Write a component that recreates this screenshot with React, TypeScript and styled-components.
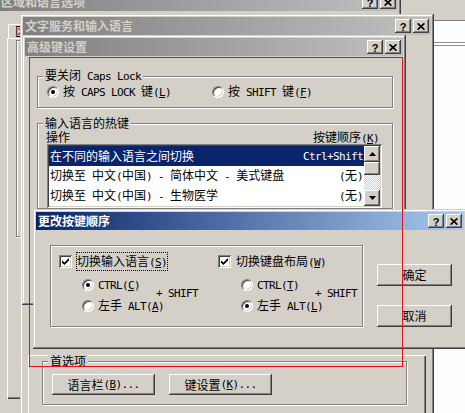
import React from "react";
import styled, { createGlobalStyle, css } from "styled-components";

const FACE = "#d4d0c8";
const SHADOW = "#808080";
const DARK = "#404040";
const NAVY = "#0a246a";

const GlobalStyle = createGlobalStyle`
  html, body { margin: 0; padding: 0; overflow: hidden; }
  body {
    background: ${FACE};
    font-family: "Noto Sans CJK SC", "DejaVu Sans", sans-serif;
    font-size: 12px;
    line-height: 14px;
    color: #000;
  }
  u { text-underline-offset: 1px; }
`;

const raisedWin = css`
  box-shadow: inset -1px -1px ${DARK}, inset 1px 1px ${FACE},
    inset -2px -2px ${SHADOW}, inset 2px 2px #fff;
`;

const raisedBtn = css`
  box-shadow: inset -1px -1px ${DARK}, inset 1px 1px #fff,
    inset -2px -2px ${SHADOW}, inset 2px 2px ${FACE};
`;

const sunken = css`
  box-shadow: inset 1px 1px ${SHADOW}, inset -1px -1px #fff,
    inset 2px 2px ${DARK}, inset -2px -2px ${FACE};
`;

const Desktop = styled.div`
  position: relative;
  width: 465px;
  height: 413px;
  overflow: hidden;
  background: ${FACE};
`;

// latin runs use a half-width mono face, like SimSun's ascii
const Lat = styled.span`
  font-family: "DejaVu Sans Mono", "Liberation Mono", monospace;
  font-size: 11px;
  letter-spacing: -0.62px;
  white-space: pre;
`;

const mnemonic = (s: string) =>
  s.split(/&(.)/).map((p, i) => (i % 2 ? <u key={i}>{p}</u> : p));

const Txt = ({ s }: { s: string }) => (
  <>
    {s
      .split(/([\u0000-\u2e7f]+)/)
      .filter(Boolean)
      .map((run, i) =>
        /^[\u0000-\u2e7f]+$/.test(run) ? (
          <Lat key={i}>{mnemonic(run)}</Lat>
        ) : (
          <React.Fragment key={i}>{run}</React.Fragment>
        )
      )}
  </>
);

/* ---------- windows ---------- */

const Win = styled.div<{ $x: number; $y: number; $w: number; $h: number }>`
  position: absolute;
  left: ${(p) => p.$x}px;
  top: ${(p) => p.$y}px;
  width: ${(p) => p.$w}px;
  height: ${(p) => p.$h}px;
  box-sizing: border-box;
  padding: 3px;
  background: ${FACE};
  display: flex;
  flex-direction: column;
  ${raisedWin}
`;

const TitleBar = styled.div<{ $active?: boolean }>`
  flex: none;
  height: 18px;
  display: flex;
  align-items: center;
  gap: 2px;
  padding: 0 2px;
  background: linear-gradient(
    to right,
    ${(p) => (p.$active ? `${NAVY}, #a6caf0` : `${SHADOW}, #c0c0c0`)}
  );
  color: ${(p) => (p.$active ? "#fff" : FACE)};
  font-weight: 700;
`;

const TitleText = styled.div`
  flex: 1;
  white-space: nowrap;
  overflow: hidden;
`;

const CapBtn = styled.div`
  width: 16px;
  height: 14px;
  box-sizing: border-box;
  background: ${FACE};
  display: flex;
  align-items: center;
  justify-content: center;
  color: #000;
  font: bold 11px "Liberation Sans", sans-serif;
  padding-top: 1px;
  ${raisedBtn}
`;

const Caption = ({ title, active }: { title: string; active?: boolean }) => (
  <TitleBar $active={active}>
    <TitleText>{title}</TitleText>
    <CapBtn>?</CapBtn>
    <CapBtn>
      <svg width="8" height="7" viewBox="0 0 8 7">
        <path d="M0.6 0.4 7.4 6.6 M7.4 0.4 0.6 6.6" stroke="#000" strokeWidth="1.7" />
      </svg>
    </CapBtn>
  </TitleBar>
);

/* ---------- common controls ---------- */

const GroupBox = styled.fieldset`
  margin: 0;
  min-width: 0;
  border: 1px solid ${SHADOW};
  box-shadow: inset 1px 1px #fff, 1px 1px #fff;
`;

const Legend = styled.legend`
  padding: 0 2px;
  margin-left: -4px;
  line-height: 12px;
  background: ${FACE};
`;

const PushBtn = styled.div<{ $w?: number; $h?: number }>`
  width: ${(p) => p.$w ?? 75}px;
  height: ${(p) => p.$h ?? 22}px;
  box-sizing: border-box;
  background: ${FACE};
  display: flex;
  align-items: center;
  justify-content: center;
  white-space: nowrap;
  ${raisedBtn}
`;

const Opt = styled.div`
  display: flex;
  align-items: center;
  gap: 4px;
  height: 14px;
  white-space: nowrap;
`;

const RadioDot = styled.span<{ $on?: boolean }>`
  flex: none;
  width: 12px;
  height: 12px;
  box-sizing: border-box;
  border-radius: 50%;
  background: #fff;
  border: 1px solid;
  border-color: ${SHADOW} #fff #fff ${SHADOW};
  box-shadow: inset 1px 1px ${DARK}, inset -1px -1px ${FACE};
  display: flex;
  align-items: center;
  justify-content: center;

  &::after {
    content: "";
    display: ${(p) => (p.$on ? "block" : "none")};
    width: 4px;
    height: 4px;
    border-radius: 50%;
    background: #000;
  }
`;

const Radio = ({ label, on }: { label: string; on?: boolean }) => (
  <Opt>
    <RadioDot $on={on} />
    <span>
      <Txt s={label} />
    </span>
  </Opt>
);

const CheckRow = styled.div`
  display: flex;
  align-items: center;
  gap: 4px;
  height: 17px;
  white-space: nowrap;
`;

const CheckBox = styled.span`
  flex: none;
  width: 13px;
  height: 13px;
  box-sizing: border-box;
  background: #fff;
  display: flex;
  align-items: center;
  justify-content: center;
  ${sunken}
`;

const CheckLabel = styled.span<{ $focus?: boolean }>`
  border: 1px dotted ${(p) => (p.$focus ? "#000" : "transparent")};
  line-height: 15px;
`;

const Check = ({ label, focus }: { label: string; focus?: boolean }) => (
  <CheckRow>
    <CheckBox>
      <svg width="7" height="7" viewBox="0 0 7 7">
        <path d="M0 2.2 L2.4 4.4 L7 0 L7 2.6 L2.4 7 L0 4.8 Z" fill="#000" />
      </svg>
    </CheckBox>
    <CheckLabel $focus={focus}>
      <Txt s={label} />
    </CheckLabel>
  </CheckRow>
);

/* ---------- window 1: 区域和语言选项 (behind) ---------- */

const W1Body = styled.div`
  padding: 13px 0 0 8px;
`;

const TabRow = styled.div`
  display: flex;
  height: 14px;
`;

const Tab = styled.div`
  padding: 0 6px 0 7px;
  margin-left: 1px;
  white-space: nowrap;
  box-shadow: inset 1px 1px #fff, inset -1px 0 ${DARK};
`;

const TabPage = styled.div<{ $h: number }>`
  height: ${(p) => p.$h}px;
  box-sizing: border-box;
  box-shadow: inset 1px 1px #fff, inset -1px -1px ${DARK}, inset -2px -2px ${SHADOW};
`;

const W1Page = styled(TabPage)`
  padding: 2px 9px;
`;

const W1Group = styled.div`
  height: 195px;
  border: 1px solid ${SHADOW};
  box-shadow: inset 1px 1px #fff, 1px 1px #fff;
`;

/* ---------- window 2: 文字服务和输入语言 ---------- */

const W2Body = styled.div`
  padding: 27px 5px 0;
`;

const W2Page = styled(TabPage)`
  padding: 0 19px 0 14px;
`;

const PrefGroup = styled(GroupBox)`
  margin-top: 293px;
  padding: 7px 9px 9px;
  display: flex;
  gap: 14px;
`;

const BackApp = styled.div`
  position: absolute;
  left: 430px;
  top: 20px;
  width: 40px;
  height: 400px;
  background: #fbfdff;
  border-top: 1px solid ${SHADOW};
`;

const BackRule = styled.div`
  margin-top: 21px;
  height: 2px;
  border-top: 1px solid #8c8c8c;
  border-bottom: 1px solid #8c8c8c;
`;

/* ---------- window 3: 高级键设置 ---------- */

const W3Body = styled.div`
  padding: 13px 10px 0 12px;
  display: flex;
  flex-direction: column;
  gap: 9px;
`;

const CapsGroup = styled(GroupBox)`
  padding: 2px 9px 8px;
  display: grid;
  grid-template-columns: 165px auto;
`;

const HotkeyGroup = styled(GroupBox)`
  padding: 0 10px 0 9px;
`;

const ListHeader = styled.div`
  display: flex;
  justify-content: space-between;
  height: 12px;
  line-height: 12px;
  margin: 2px 0 0 -1px;
  padding-right: 3px;
`;

const ListView = styled.div`
  margin-top: 1px;
  height: 64px;
  box-sizing: border-box;
  padding: 2px;
  background: #fff;
  display: flex;
  ${sunken}
`;

const Rows = styled.div`
  flex: 1;
  min-width: 0;
`;

const Row = styled.div<{ $sel?: boolean }>`
  height: 20px;
  display: flex;
  align-items: center;
  justify-content: space-between;
  padding: 0 1px 0 1px;
  white-space: nowrap;
  background: ${(p) => (p.$sel ? NAVY : "transparent")};
  color: ${(p) => (p.$sel ? "#fff" : "#000")};
`;

const ScrollBar = styled.div`
  width: 16px;
  display: flex;
  flex-direction: column;
`;

const ScrollBtn = styled.div`
  height: 16px;
  flex: none;
  background: ${FACE};
  display: flex;
  align-items: center;
  justify-content: center;
  ${raisedBtn}
`;

const Thumb = styled.div`
  height: 13px;
  flex: none;
  background: ${FACE};
  ${raisedBtn}
`;

const Track = styled.div`
  flex: 1;
  background: repeating-conic-gradient(#fff 0 25%, ${FACE} 0 50%) 0 0 / 2px 2px;
`;

const Arrow = ({ down }: { down?: boolean }) => (
  <svg width="7" height="4" viewBox="0 0 7 4">
    <path d={down ? "M0 0 H7 L3.5 4 Z" : "M0 4 H7 L3.5 0 Z"} fill="#000" />
  </svg>
);

/* ---------- window 4: 更改按键顺序 (active) ---------- */

const W4Body = styled.div`
  padding: 15px 0 0 14px;
  display: flex;
  align-items: flex-start;
`;

const KeyGroup = styled.div`
  width: 313px;
  height: 82px;
  box-sizing: border-box;
  border: 1px solid ${SHADOW};
  box-shadow: inset 1px 1px #fff, 1px 1px #fff;
  padding: 7px 0 0 8px;
  display: grid;
  grid-template-columns: 159px auto;
`;

const Combo = styled.div`
  display: flex;
  margin: 8px 0 0 23px;
`;

const RadioStack = styled.div`
  width: 74px;
  display: flex;
  flex-direction: column;
  gap: 7px;
`;

const PlusShift = styled.div`
  margin-top: 7px;
  height: 14px;
  white-space: nowrap;
`;

const BtnCol = styled.div`
  margin: 19px 0 0 14px;
  display: flex;
  flex-direction: column;
  gap: 19px;
`;

const KeyColumn = ({
  check,
  focus,
  ctrl,
  alt,
  altOn,
}: {
  check: string;
  focus?: boolean;
  ctrl: string;
  alt: string;
  altOn?: boolean;
}) => (
  <div>
    <Check label={check} focus={focus} />
    <Combo>
      <RadioStack>
        <Radio label={ctrl} on={!altOn} />
        <Radio label={alt} on={altOn} />
      </RadioStack>
      <PlusShift>
        <Txt s="+ SHIFT" />
      </PlusShift>
    </Combo>
  </div>
);

/* red annotation frame drawn over the shot */
const Marker = styled.div`
  position: absolute;
  left: 29px;
  top: 57px;
  width: 374px;
  height: 310px;
  box-sizing: border-box;
  border: 1px solid #e2141a;
  pointer-events: none;
`;

const hotkeys = [
  { name: "在不同的输入语言之间切换", key: "Ctrl+Shift" },
  { name: "切换至 中文(中国) - 简体中文 - 美式键盘", key: "(无)" },
  { name: "切换至 中文(中国) - 生物医学", key: "(无)" },
];

export default function App() {
  return (
    <Desktop>
      <GlobalStyle />

      <Win $x={-4} $y={-10} $w={405} $h={430}>
        <Caption title="区域和语言选项" />
        <W1Body>
          <TabRow>
            <Tab>区域选项</Tab>
          </TabRow>
          <W1Page $h={361}>
            <W1Group />
          </W1Page>
        </W1Body>
      </Win>

      <BackApp>
        <BackRule />
      </BackApp>

      <Win $x={20} $y={14} $w={414} $h={420}>
        <Caption title="文字服务和输入语言" />
        <W2Body>
          <W2Page $h={380}>
            <PrefGroup>
              <Legend>首选项</Legend>
              <PushBtn $w={103} $h={21}>
                <Txt s="语言栏(&B)..." />
              </PushBtn>
              <PushBtn $w={103} $h={21}>
                <Txt s="键设置(&K)..." />
              </PushBtn>
            </PrefGroup>
          </W2Page>
        </W2Body>
      </Win>

      <Win $x={22} $y={35} $w={384} $h={270}>
        <Caption title="高级键设置" />
        <W3Body>
          <CapsGroup>
            <Legend>
              <Txt s="要关闭 Caps Lock" />
            </Legend>
            <Radio label="按 CAPS LOCK 键(&L)" on />
            <Radio label="按 SHIFT 键(&F)" />
          </CapsGroup>
          <HotkeyGroup>
            <Legend>输入语言的热键</Legend>
            <ListHeader>
              <span>操作</span>
              <span>
                <Txt s="按键顺序(&K)" />
              </span>
            </ListHeader>
            <ListView>
              <Rows>
                {hotkeys.map((h, i) => (
                  <Row key={i} $sel={i === 0}>
                    <span>
                      <Txt s={h.name} />
                    </span>
                    <span>
                      <Txt s={h.key} />
                    </span>
                  </Row>
                ))}
              </Rows>
              <ScrollBar>
                <ScrollBtn>
                  <Arrow />
                </ScrollBtn>
                <Thumb />
                <Track />
                <ScrollBtn>
                  <Arrow down />
                </ScrollBtn>
              </ScrollBar>
            </ListView>
          </HotkeyGroup>
        </W3Body>
      </Win>

      <Win $x={33} $y={209} $w={434} $h={140}>
        <Caption title="更改按键顺序" active />
        <W4Body>
          <KeyGroup>
            <KeyColumn check="切换输入语言(&S)" focus ctrl="CTRL(&C)" alt="左手 ALT(&A)" />
            <KeyColumn check="切换键盘布局(&W)" ctrl="CTRL(&T)" alt="左手 ALT(&L)" altOn />
          </KeyGroup>
          <BtnCol>
            <PushBtn>确定</PushBtn>
            <PushBtn>取消</PushBtn>
          </BtnCol>
        </W4Body>
      </Win>

      <Marker />
    </Desktop>
  );
}
